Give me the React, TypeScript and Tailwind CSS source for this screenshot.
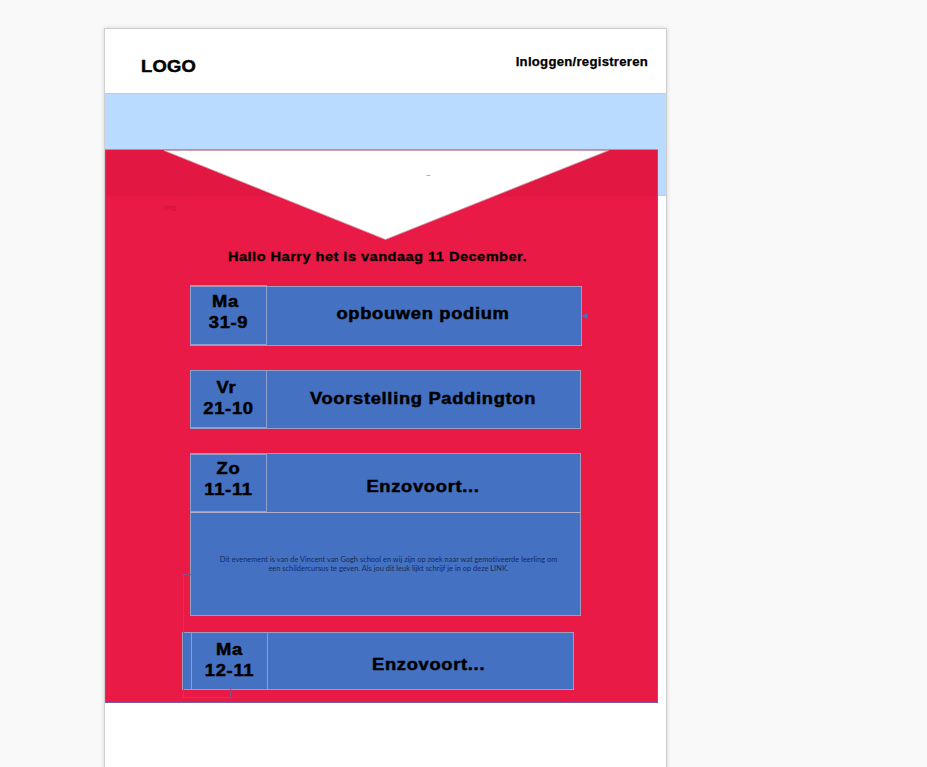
import { clsx } from "clsx";

type EventCardProps = {
  day: string;
  date: string;
  title: string;
  className: string;
  dateClassName: string;
  dayClassName?: string;
  titleClassName: string;
};

const label = "text-[17px] leading-[21px] font-bold scale-x-[1.08] [-webkit-text-stroke:0.5px_black]";

function EventCard({ day, date, title, className, dateClassName, dayClassName, titleClassName }: EventCardProps) {
  return (
    <article className={clsx("flex shrink-0 items-start border border-[#9a9dbe] bg-[#4571c2]", className)}>
      <div className={clsx("shrink-0 border text-center", dateClassName)}>
        <div className={clsx("tracking-[0.64px]", label, dayClassName)}>{day}</div>
        <div className={clsx("tracking-[0.64px]", label)}>{date}</div>
      </div>
      <h2 className={clsx("flex-1 text-center tracking-[0.62px] whitespace-nowrap", label, titleClassName)}>{title}</h2>
    </article>
  );
}

export default function App() {
  return (
    <div className="flex h-[767px] w-[927px] overflow-hidden bg-[#f9f9f9] pt-[29px] pl-[105px] font-['Liberation_Sans',Arial,sans-serif] text-black">
      <div className="flex h-[760px] w-[561px] shrink-0 flex-col bg-white shadow-[0_0_0_1px_#cfcfcf,0_0_4px_1px_#d4d4d4]">
        <header className="flex h-[65px] shrink-0 items-start justify-between border-b border-[#c5cbd1] pr-[18px] pl-9">
          <div className={clsx("mt-[27px] origin-left tracking-[0.2px]", label)}>LOGO</div>
          <a className="mt-[25px] origin-right scale-x-[1.05] text-[12.5px] leading-4 font-bold tracking-[0.26px] [-webkit-text-stroke:0.25px_black]">
            Inloggen/registreren
          </a>
        </header>
        <div className="h-[55px] shrink-0 bg-[#b9dbff]" />
        <div className="flex h-[554px] shrink-0">
          <main className="relative flex w-[553px] flex-col border border-[#755fa4] bg-[#e91a45] bg-linear-to-b from-[#e21843] from-[46px] to-[#e91a45] to-[47px]">
            <svg className="absolute -top-px -left-px" width="553" height="554" viewBox="0 0 553 554" fill="none">
              <path d="M59 1.500H503.500L280.500 90.500Z" fill="white" stroke="#cda5ad" strokeWidth="0.8" />
              <path d="M0 0.500H553" stroke="#7f9fd8" />
              <path d="M86 425.500H78.500V548.500H125.500V539" stroke="#86548a" />
              <path d="M476.500 167L482.500 164V170Z" fill="#4571c2" />
              <path d="M321.500 26.500H325.500" stroke="#b0b3c8" />
            </svg>
            <span className="mt-[51px] ml-[58px] h-3 font-[Lato,sans-serif] text-[8px] leading-3 text-[#c9163c]">
              img
            </span>
            <h1 className="mt-[35px] ml-[122px] h-[18px] shrink-0 origin-left scale-x-[1.08] text-[13.5px] leading-[18px] font-bold tracking-[0.44px] whitespace-nowrap [-webkit-text-stroke:0.3px_black]">
              Hallo Harry het is vandaag 11 December.
            </h1>
            <EventCard
              day="Ma" date="31-9" title="opbouwen podium"
              className="mt-5 ml-[84px] h-[60px] w-[392px]"
              dateClassName="-mt-[2px] -ml-px h-[60px] w-[77px] border-[#8f9fcb] pt-[5px]"
              dayClassName="-ml-[6px]"
              titleClassName="mt-4 -ml-[2px]"
            />
            <EventCard
              day="Vr" date="21-10" title="Voorstelling Paddington"
              className="mt-6 ml-[84px] h-[59px] w-[391px]"
              dateClassName="-mt-px -ml-px h-[58px] w-[77px] border-[#8f9fcb] pt-[6px]"
              dayClassName="-ml-[4px]"
              titleClassName="mt-[17px] -ml-px"
            />
            <EventCard
              day="Zo" date="11-11" title="Enzovoort..."
              className="mt-6 ml-[84px] h-[60px] w-[391px] border-b-[#b0afc5]"
              dateClassName="-ml-px h-[58px] w-[77px] border-[#8f9fcb] pt-[3px]"
              titleClassName="mt-[22px] -ml-px"
            />
            <p className="ml-[84px] h-[103px] w-[391px] shrink-0 border border-t-0 border-[#9a9dbe] bg-[#4571c2] pt-[42px] pl-[6px] text-center font-[Lato,sans-serif] text-[7.4px] leading-[9px] tracking-[0.025px] whitespace-nowrap text-[#152b5c]">
              Dit evenement is van de Vincent van Gogh school en wij zijn op zoek naar wat gemotiveerde leerling om
              <br />
              een schildercursus te geven. Als jou dit leuk lijkt schrijf je in op deze LINK.
            </p>
            <EventCard
              day="Ma" date="12-11" title="Enzovoort..."
              className="mt-4 ml-[76px] h-[58px] w-[392px]"
              dateClassName="ml-[8px] h-[56px] w-[77px] border-x-[#8f9fcb] border-y-0 pt-[6px]"
              titleClassName="mt-[21px] pl-[15px]"
            />
          </main>
          <div className="h-[47px] flex-1 border-b border-[#c5cbd1] bg-[#b9dbff]" />
        </div>
      </div>
    </div>
  );
}
